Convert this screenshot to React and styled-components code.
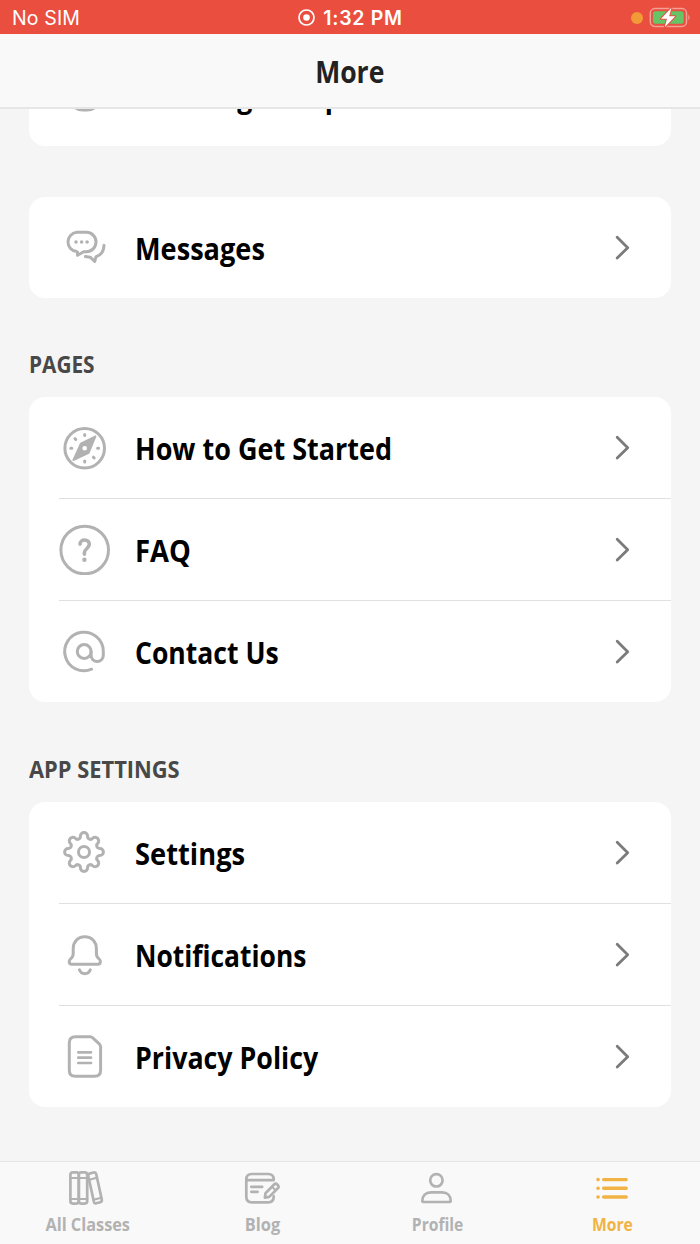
import styled, { createGlobalStyle } from "styled-components";

const GlobalStyle = createGlobalStyle`
  * {
    box-sizing: border-box;
  }

  body {
    margin: 0;
    background: #f5f5f5;
  }
`;

const Screen = styled.div`
  display: flex;
  flex-direction: column;
  width: 700px;
  height: 1244px;
  overflow: hidden;
  background: #f5f5f5;
  font-family: "Open Sans", "Noto Sans", sans-serif;
`;

const StatusBar = styled.header`
  display: grid;
  grid-template-columns: 1fr auto 1fr;
  align-items: center;
  flex: none;
  height: 34px;
  padding: 1px 8px 0 12px;
  background: #e94e3f;
  color: #fff;
  font-family: Inter, sans-serif;
  font-size: 19.5px;
`;

const Carrier = styled.span`
  letter-spacing: 0.15px;
`;

const Clock = styled.div`
  display: flex;
  align-items: center;
  gap: 8px;
  padding-right: 3px;
  font-weight: 600;
  letter-spacing: 0.7px;
`;

const StatusIcons = styled.div`
  display: flex;
  align-items: center;
  justify-content: flex-end;
  gap: 6px;
`;

const RecordingDot = styled.span`
  width: 12px;
  height: 12px;
  border-radius: 50%;
  background: #f19a37;
`;

const TitleBar = styled.div`
  display: flex;
  align-items: center;
  justify-content: center;
  flex: none;
  height: 75px;
  padding-top: 1px;
  border-bottom: 2px solid #e6e6e6;
  background: #f9f9f9;
`;

const Title = styled.h1`
  margin: 0;
  color: #222;
  font-size: 30.5px;
  font-weight: 700;
  line-height: 40px;
  transform: scaleX(0.87);
`;

const Content = styled.main`
  flex: 1;
  min-height: 0;
  overflow: hidden;
`;

const Sections = styled.div`
  display: flex;
  flex-direction: column;
  margin-top: -64px;
  padding: 0 29px;
`;

const Card = styled.section`
  margin-bottom: ${({ $gap = 0 }) => $gap}px;
  border-radius: 16px;
  background: #fff;
`;

const SectionTitle = styled.h2`
  height: 50px;
  margin: 0;
  color: #484848;
  font-size: 23.5px;
  font-weight: 700;
  line-height: 34px;
  transform: scaleX(${({ $squeeze }) => $squeeze});
  transform-origin: left;
`;

const RowContainer = styled.div`
  display: flex;
  align-items: center;
  height: 101px;
  margin-left: 30px;
  padding-right: 38px;

  & + & {
    height: 102px;
    border-top: 1px solid #e0e0e0;
  }
`;

const RowIcon = styled.svg`
  flex: none;
  width: 52px;
  height: 51px;
  fill: none;
  stroke: #b2b2b2;
  stroke-width: 3;
  stroke-linecap: round;
  stroke-linejoin: round;
`;

const RowLabel = styled.span`
  flex: 1;
  margin-left: 24px;
  color: #000;
  font-size: 30.5px;
  font-weight: 700;
  line-height: 40px;
  white-space: nowrap;
  transform: scaleX(${({ $squeeze }) => $squeeze});
  transform-origin: left;
`;

const Chevron = styled.svg`
  flex: none;
  width: 20px;
  height: 27px;
  fill: none;
  stroke: #7b7b7b;
  stroke-width: 2.8;
  stroke-linecap: round;
  stroke-linejoin: round;
`;

const TabBar = styled.nav`
  display: grid;
  grid-template-columns: repeat(4, 1fr);
  flex: none;
  height: 83px;
  border-top: 1px solid #e6e6e6;
  background: #f9f9f9;
`;

const Tab = styled.div`
  display: flex;
  flex-direction: column;
  align-items: center;
  padding-top: 6px;
  color: ${({ $active }) => ($active ? "#f1b344" : "#b2b2b2")};
`;

const TabIcon = styled.svg`
  flex: none;
  width: 45px;
  height: 40px;
  fill: none;
  stroke: currentColor;
  stroke-width: 2.7;
  stroke-linecap: round;
  stroke-linejoin: round;
`;

const TabLabel = styled.span`
  margin-top: 4px;
  font-size: 18px;
  font-weight: 700;
  line-height: 24px;
  white-space: nowrap;
  transform: scaleX(${({ $squeeze }) => $squeeze});
`;

const GEAR_CENTER = 25;

function gearPath() {
  const point = (x, y, deg) => {
    const a = (deg * Math.PI) / 180;
    const px = GEAR_CENTER + x * Math.cos(a) - y * Math.sin(a);
    const py = GEAR_CENTER + x * Math.sin(a) + y * Math.cos(a);
    return `${px.toFixed(2)} ${py.toFixed(2)}`;
  };
  let d = `M${point(-3.6, -15.8, 0)}`;
  for (let i = 0; i < 8; i++) {
    d += `A3.6 3.6 0 0 1 ${point(3.6, -15.8, i * 45)}`;
    d += `A2.85 2.85 0 0 0 ${point(-3.6, -15.8, (i + 1) * 45)}`;
  }
  return `${d}Z`;
}

const rowIcons = {
  group: <rect x="10" y="8" width="32" height="32" rx="14" fill="#b2b2b2" />,
  messages: (
    <>
      <path d="M17.7 29.6A9.7 9.7 0 0 1 17.7 10.3H27.3A9.7 9.7 0 0 1 27.3 29.7H24.7L18.5 33.2V30.2Z" />
      <g fill="#b2b2b2" stroke="none">
        <circle cx="17" cy="20" r="1.8" />
        <circle cx="22.6" cy="20" r="1.8" />
        <circle cx="28.1" cy="20" r="1.8" />
      </g>
      <path d="M45 23.3C44.8 29.3 41.6 33.3 37 34.7L35.7 39.5L31.2 35.2L26.4 34.6" />
    </>
  ),
  compass: (
    <>
      <circle cx="25.7" cy="26.3" r="19.8" />
      <path
        d="M36.5 14.4L21.8 21.5L14.3 38.2L29.7 31ZM25.7 23.1A3.2 3.2 0 1 0 25.7 29.5A3.2 3.2 0 1 0 25.7 23.1Z"
        fill="#b2b2b2"
        fillRule="evenodd"
        strokeWidth="1.8"
      />
      <path d="M25.7 12.6V13.6M25.7 39V40M11.8 26.3H12.8M38.6 26.3H39.6M16 16.7L16.8 17.5M34.4 35.2L35.2 36" />
    </>
  ),
  question: (
    <>
      <circle cx="25.7" cy="26" r="23.8" />
      <path d="M21 20.1C21.1 17.4 23.2 16 25.6 16C28.2 16 30.3 17.7 30.3 20.3C30.3 24.3 25.4 24.7 25.4 28.8V30.3" strokeWidth="3.6" />
      <circle cx="25.4" cy="35.7" r="2.2" fill="#b2b2b2" stroke="none" />
    </>
  ),
  at: (
    <>
      <circle cx="25.2" cy="25.5" r="6.9" />
      <path d="M32.6 43.2A19.3 19.3 0 1 1 44.3 25.5V29.4A6.1 6.1 0 0 1 32.1 29.4V25.5" />
    </>
  ),
  gear: (
    <>
      <path d={gearPath()} />
      <circle cx="25" cy="25" r="5.5" />
    </>
  ),
  bell: (
    <>
      <path d="M25.8 7.8C18.6 7.8 14.2 12.8 14.2 19.8V24.5C14.2 30.5 10.2 28.8 10.2 32.6C10.2 34.4 11.2 35.3 12.8 35.3H38.8C40.4 35.3 41.4 34.4 41.4 32.6C41.4 28.8 37.4 30.5 37.4 24.5V19.8C37.4 12.8 33 7.8 25.8 7.8Z" />
      <path d="M20.4 40.8C22.4 46 29.3 46 31.3 40.8" />
    </>
  ),
  document: (
    <>
      <path d="M16.3 5.7H31.2C32.4 5.7 33 6 33.8 6.8L40.5 13.2C41.3 14 41.6 14.7 41.6 15.9V39.3Q41.6 45.3 35.6 45.3H16.3Q10.3 45.3 10.3 39.3V11.7Q10.3 5.7 16.3 5.7Z" />
      <path d="M19.3 21.3H32M19.3 26.7H32M19.3 32H32" strokeWidth="2.7" />
    </>
  ),
};

const tabIcons = {
  books: (
    <>
      <rect x="5.4" y="4.4" width="8.4" height="31.2" rx="2.5" />
      <rect x="13.8" y="4.4" width="8.4" height="31.2" rx="2.5" />
      <path d="M5.4 10H22.2M5.4 31H22.2M24.3 11.8L31.8 9.8M28.7 31.8L36.2 29.8" strokeWidth="2.2" />
      <path d="M25 5.4L28.7 4.5Q30.7 4 31.2 6L36.8 31.5Q37.2 33.7 35.2 34.2L31.4 35.3Q29.4 35.8 28.9 33.8L23.3 8.2Q22.8 6 25 5.4Z" />
    </>
  ),
  blog: (
    <>
      <path d="M6.3 12.1H33.7V11.5Q33.7 6 28.2 6H11.8Q6.3 6 6.3 11.5V28.8Q6.3 34.3 11.8 34.3H28.2Q33.7 34.3 33.7 28.8V28.2" />
      <path d="M11.3 18.8H22.2M11.3 23.8H17.6" />
      <path d="M24.9 29.7L25.5 25.2L34.1 16.5Q35.7 15 37.2 16.5L38 17.3Q39.3 18.8 37.8 20.3L29.2 28.9Z" />
      <path d="M32 18.8L35.5 22.3" strokeWidth="2" />
    </>
  ),
  profile: (
    <>
      <circle cx="21.4" cy="12.3" r="6.2" />
      <path d="M7.3 32.9C7.3 27.6 10.7 24.3 15.7 24.3H27.3C32.3 24.3 35.7 27.6 35.7 32.9Q35.7 34 34.6 34H8.4Q7.3 34 7.3 32.9Z" />
    </>
  ),
  list: (
    <>
      <path d="M13.6 11.6H36.2M13.6 20.3H36.2M13.6 29H36.2" strokeWidth="3.4" />
      <path d="M8 11.6H8.1M8 20.3H8.1M8 29H8.1" strokeWidth="3.6" />
    </>
  ),
};

function Row({ icon, label, squeeze }) {
  return (
    <RowContainer>
      <RowIcon viewBox="0 0 52 51">{rowIcons[icon]}</RowIcon>
      <RowLabel $squeeze={squeeze}>{label}</RowLabel>
      <Chevron viewBox="0 0 20 27">
        <path d="M4.2 3.3L14.7 13.7L4.2 24" />
      </Chevron>
    </RowContainer>
  );
}

const tabs = [
  { icon: "books", label: "All Classes", squeeze: 0.905 },
  { icon: "blog", label: "Blog", squeeze: 0.91 },
  { icon: "profile", label: "Profile", squeeze: 0.87 },
  { icon: "list", label: "More", squeeze: 0.87, active: true },
];

export default function App() {
  return (
    <Screen>
      <GlobalStyle />
      <StatusBar>
        <Carrier>No SIM</Carrier>
        <Clock>
          <svg width="17" height="17" viewBox="0 0 17 17">
            <circle cx="8.5" cy="8.5" r="7.5" fill="none" stroke="#fff" strokeWidth="1.7" />
            <circle cx="8.5" cy="8.5" r="3.3" fill="#fff" />
          </svg>
          1:32 PM
        </Clock>
        <StatusIcons>
          <RecordingDot />
          <svg width="43" height="22" viewBox="0 0 43 22">
            <rect x="1.3" y="1.6" width="36.2" height="17.8" rx="4.5" fill="none" stroke="#f4a096" strokeWidth="1.5" />
            <path d="M39.4 7.6Q41.9 10.5 39.4 13.4Z" fill="#f4a096" />
            <rect x="3.9" y="4.2" width="30.8" height="12.6" rx="2.5" fill="#65c466" />
            <path
              d="M22.5 0.8L12 11.8H18L15.7 20.2L26.3 9.2H20.2Z"
              fill="#fff"
              stroke="#e94e3f"
              strokeWidth="2"
              paintOrder="stroke"
              strokeLinejoin="round"
            />
          </svg>
        </StatusIcons>
      </StatusBar>
      <TitleBar>
        <Title>More</Title>
      </TitleBar>
      <Content>
        <Sections>
          <Card $gap={51}>
            <Row icon="group" label="Learning Groups" squeeze={0.875} />
          </Card>
          <Card $gap={49}>
            <Row icon="messages" label="Messages" squeeze={0.89} />
          </Card>
          <SectionTitle $squeeze={0.885}>PAGES</SectionTitle>
          <Card $gap={50}>
            <Row icon="compass" label="How to Get Started" squeeze={0.885} />
            <Row icon="question" label="FAQ" squeeze={0.9} />
            <Row icon="at" label="Contact Us" squeeze={0.87} />
          </Card>
          <SectionTitle $squeeze={0.93}>APP SETTINGS</SectionTitle>
          <Card>
            <Row icon="gear" label="Settings" squeeze={0.895} />
            <Row icon="bell" label="Notifications" squeeze={0.865} />
            <Row icon="document" label="Privacy Policy" squeeze={0.878} />
          </Card>
        </Sections>
      </Content>
      <TabBar>
        {tabs.map((tab) => (
          <Tab key={tab.label} $active={tab.active}>
            <TabIcon viewBox="0 0 45 40">{tabIcons[tab.icon]}</TabIcon>
            <TabLabel $squeeze={tab.squeeze}>{tab.label}</TabLabel>
          </Tab>
        ))}
      </TabBar>
    </Screen>
  );
}
